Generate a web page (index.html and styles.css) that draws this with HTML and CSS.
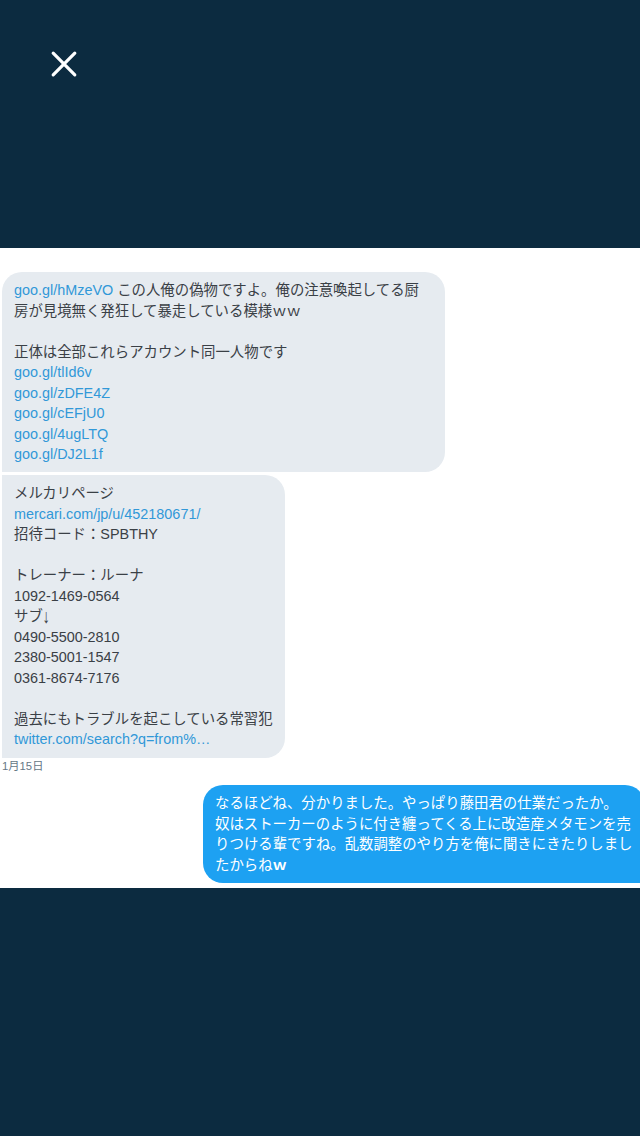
FILE: index.html
```html
<!DOCTYPE html>
<html lang="ja">
<head>
<meta charset="utf-8">
<title>メッセージ</title>
<link rel="stylesheet" href="styles.css">
</head>
<body>
<div class="viewer">
  <header class="topbar">
    <button class="close" aria-label="閉じる"><svg width="28" height="28" viewBox="0 0 28 28"><path d="M3.2 3.2 24.8 24.8M24.8 3.2 3.2 24.8"/></svg></button>
  </header>
  <main class="chat">
    <div class="bubble first"><p><a>goo.gl/hMzeVO</a> この人俺の偽物ですよ。俺の注意喚起してる厨</p><p>房が見境無く発狂して暴走している模様ｗｗ</p><p class="blank"></p><p>正体は全部これらアカウント同一人物です</p><p><a>goo.gl/tlId6v</a></p><p><a>goo.gl/zDFE4Z</a></p><p><a>goo.gl/cEFjU0</a></p><p><a>goo.gl/4ugLTQ</a></p><p><a>goo.gl/DJ2L1f</a></p></div>
    <div class="bubble second"><p>メルカリページ</p><p><a>mercari.com/jp/u/452180671/</a></p><p>招待コード：SPBTHY</p><p class="blank"></p><p>トレーナー：ルーナ</p><p>1092-1469-0564</p><p>サブ<span class="arrow">↓</span></p><p>0490-5500-2810</p><p>2380-5001-1547</p><p>0361-8674-7176</p><p class="blank"></p><p>過去にもトラブルを起こしている常習犯</p><p><a>twitter.com/search?q=from%…</a></p></div>
    <time class="date">1月15日</time>
    <div class="bubble sent"><p>なるほどね、分かりました。やっぱり藤田君の仕業だったか。</p><p>奴はストーカーのように付き纏ってくる上に改造産メタモンを売</p><p>りつける輩ですね。乱数調整のやり方を俺に聞きにきたりしまし</p><p>たからね<b>ｗ</b></p></div>
  </main>
</div>
</body>
</html>
```
FILE: styles.css
```css
* { box-sizing: border-box; }
body {
  margin: 0;
  background: #0c2b40;
  font-family: "Liberation Sans", "Noto Sans CJK JP", sans-serif;
}
.viewer {
  height: 1136px;
  overflow: hidden;
}
.topbar {
  height: 248px;
  padding: 50px;
}
.close {
  display: block;
  padding: 0;
  border: 0;
  background: none;
}
.close svg {
  display: block;
  fill: none;
  stroke: #fff;
  stroke-width: 3.2;
  stroke-linecap: round;
}
.chat {
  display: flex;
  flex-direction: column;
  align-items: flex-start;
  height: 640px;
  padding: 24px 0 0 2px;
  background: #fff;
  overflow: hidden;
}
.bubble {
  flex: none;
  padding: 8px 12px;
  background: #e6ebf0;
  color: #3a4046;
  font-size: 14.4px;
  line-height: 20.53px;
  white-space: nowrap;
}
.bubble p {
  height: 20.53px;
  margin: 0;
}
.bubble a { color: #3198d8; }
.first {
  width: 443px;
  height: 200px;
  border-radius: 20px 20px 20px 0;
}
.second {
  width: 283px;
  height: 283px;
  margin-top: 3px;
  border-radius: 0 20px 20px 0;
}
.arrow {
  display: inline-block;
  transform: scaleY(1.35);
}
.date {
  margin-top: 1px;
  color: #657786;
  font-size: 11.3px;
  line-height: 15px;
}
.sent {
  width: 442px;
  height: 98px;
  margin: 11px 0 0 201px;
  background: #1da1f2;
  color: #fff;
  border-radius: 20px 20px 0 20px;
}
.sent b { font-weight: 700; }
```
